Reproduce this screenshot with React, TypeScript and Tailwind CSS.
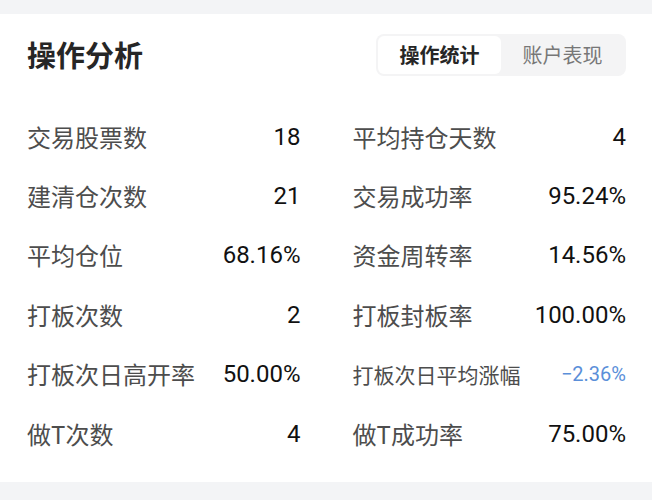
const stats: [string, string, string, string, boolean?][] = [
  ["交易股票数", "18", "平均持仓天数", "4"],
  ["建清仓次数", "21", "交易成功率", "95.24%"],
  ["平均仓位", "68.16%", "资金周转率", "14.56%"],
  ["打板次数", "2", "打板封板率", "100.00%"],
  ["打板次日高开率", "50.00%", "打板次日平均涨幅", "-2.36%", true],
  ["做T次数", "4", "做T成功率", "75.00%"],
];

const num = "font-['Roboto',sans-serif]";

export default function App() {
  return (
    <div
      className="min-h-[500px] w-[652px] bg-[#f3f4f6] pt-[14px] pb-[18px]"
      style={{ fontFamily: '"Noto Sans CJK SC", "Noto Sans", sans-serif' }}
    >
      <div className="bg-white pl-[27px] pr-[26px]">
        <div className="flex h-[82px] items-center justify-between">
          <h1 className="pb-[2px] text-[29px] font-bold leading-none text-[#262626]">操作分析</h1>
          <div className="flex h-[42px] items-center rounded-lg bg-[#f4f4f5] p-[2px]">
            <div className="flex h-[38px] w-[123px] items-center justify-center rounded-md bg-white text-[20px] font-bold text-[#262626]">
              操作统计
            </div>
            <div className="flex h-[38px] w-[123px] items-center justify-center text-[20px] text-[#777]">
              账户表现
            </div>
          </div>
        </div>
        <div className="grid grid-cols-2 gap-x-[52px] pt-[11px] pb-[18.6px]">
          {stats.map(([l1, v1, l2, v2, small]) => (
            <div key={l1} className="contents">
              <div className="flex h-[59.4px] items-center justify-between">
                <span className="text-[24px] text-[#4d4d4d]">{l1}</span>
                <span className={`${num} text-[24px] text-[#111]`}>{v1}</span>
              </div>
              <div className="flex h-[59.4px] items-center justify-between">
                <span className={small ? "text-[21px] text-[#4d4d4d]" : "text-[24px] text-[#4d4d4d]"}>{l2}</span>
                <span
                  className={
                    small
                      ? `${num} text-[20px] text-[#5b8fd9]`
                      : `${num} text-[24px] text-[#111]`
                  }
                >
                  {v2.replace("-", "−")}
                </span>
              </div>
            </div>
          ))}
        </div>
      </div>
    </div>
  );
}
